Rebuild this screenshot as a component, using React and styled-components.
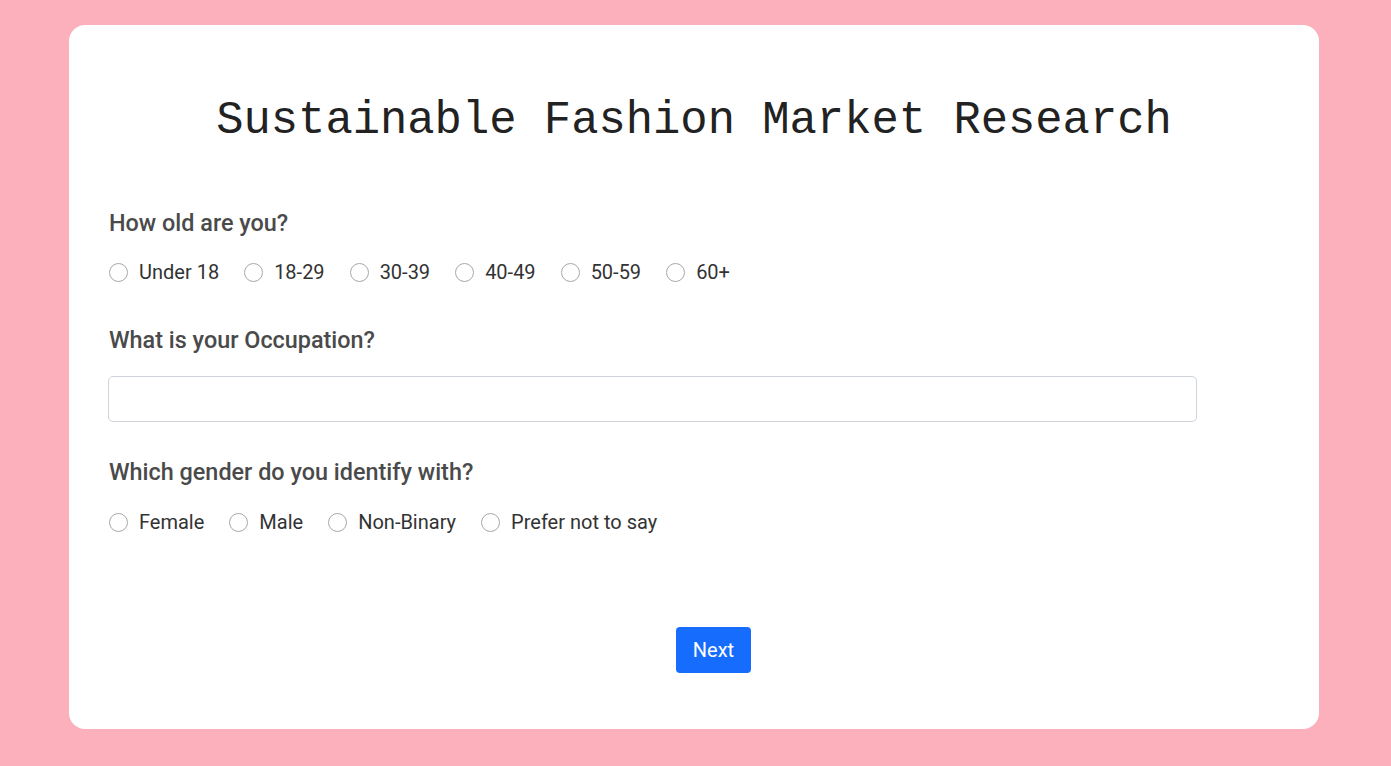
import React from 'react'
import styled, { createGlobalStyle } from 'styled-components'

const GlobalStyle = createGlobalStyle`
  html, body {
    margin: 0;
    padding: 0;
    background: #fbb0bb;
  }
  * {
    box-sizing: border-box;
  }
`

const Page = styled.div`
  min-height: 766px;
  padding: 25px 72px 37px 69px;
  background: #fbb0bb;
  font-family: Roboto, 'Liberation Sans', sans-serif;
`

const Card = styled.div`
  background: #ffffff;
  border-radius: 16px;
  height: 704px;
  padding: 67px 40px 0 40px;
`

const Title = styled.h1`
  margin: 0 0 59px;
  text-align: center;
  font-family: 'Liberation Mono', 'DejaVu Sans Mono', monospace;
  font-weight: normal;
  font-size: 45.5px;
  line-height: 58px;
  color: #222;
`

const Question = styled.div`
  margin-bottom: ${(p) => p.gap || 24}px;
`

const Label = styled.div`
  font-size: 23.4px;
  font-weight: 500;
  line-height: 28px;
  color: #4a4a4a;
  margin-bottom: ${(p) => p.space || 23}px;
`

const Options = styled.div`
  display: flex;
  align-items: center;
  gap: 25px;
`

const Option = styled.label`
  display: flex;
  align-items: center;
  gap: 11px;
  font-size: 20px;
  line-height: 24px;
  color: #333;
`

const Radio = styled.input.attrs({ type: 'radio' })`
  appearance: none;
  margin: 0;
  width: 19px;
  height: 19px;
  border: 1px solid #a8a8a8;
  border-radius: 50%;
  background: #fff;
`

const TextInput = styled.input`
  display: block;
  width: 1089px;
  height: 46px;
  margin-left: -1px;
  border: 1px solid #cfd4da;
  border-radius: 5px;
  font-size: 18px;
  padding: 0 12px;
`

const Footer = styled.div`
  display: flex;
  justify-content: center;
  padding-left: 39px;
  margin-top: 93px;
`

const Button = styled.button`
  width: 75px;
  height: 46px;
  border: none;
  border-radius: 4px;
  background: #166dfd;
  color: #fff;
  font-family: Roboto, 'Liberation Sans', sans-serif;
  font-size: 20px;
`

const ages = ['Under 18', '18-29', '30-39', '40-49', '50-59', '60+']
const genders = ['Female', 'Male', 'Non-Binary', 'Prefer not to say']

const App = () => (
  <Page>
    <GlobalStyle />
    <Card>
      <Title>Sustainable Fashion Market Research</Title>
      <Question gap={42}>
        <Label>How old are you?</Label>
        <Options>
          {ages.map((a) => (
            <Option key={a}>
              <Radio name="age" />
              {a}
            </Option>
          ))}
        </Options>
      </Question>
      <Question gap={36}>
        <Label space={22}>What is your Occupation?</Label>
        <TextInput type="text" />
      </Question>
      <Question>
        <Label space={24}>Which gender do you identify with?</Label>
        <Options>
          {genders.map((g) => (
            <Option key={g}>
              <Radio name="gender" />
              {g}
            </Option>
          ))}
        </Options>
      </Question>
      <Footer>
        <Button>Next</Button>
      </Footer>
    </Card>
  </Page>
)

export default App
